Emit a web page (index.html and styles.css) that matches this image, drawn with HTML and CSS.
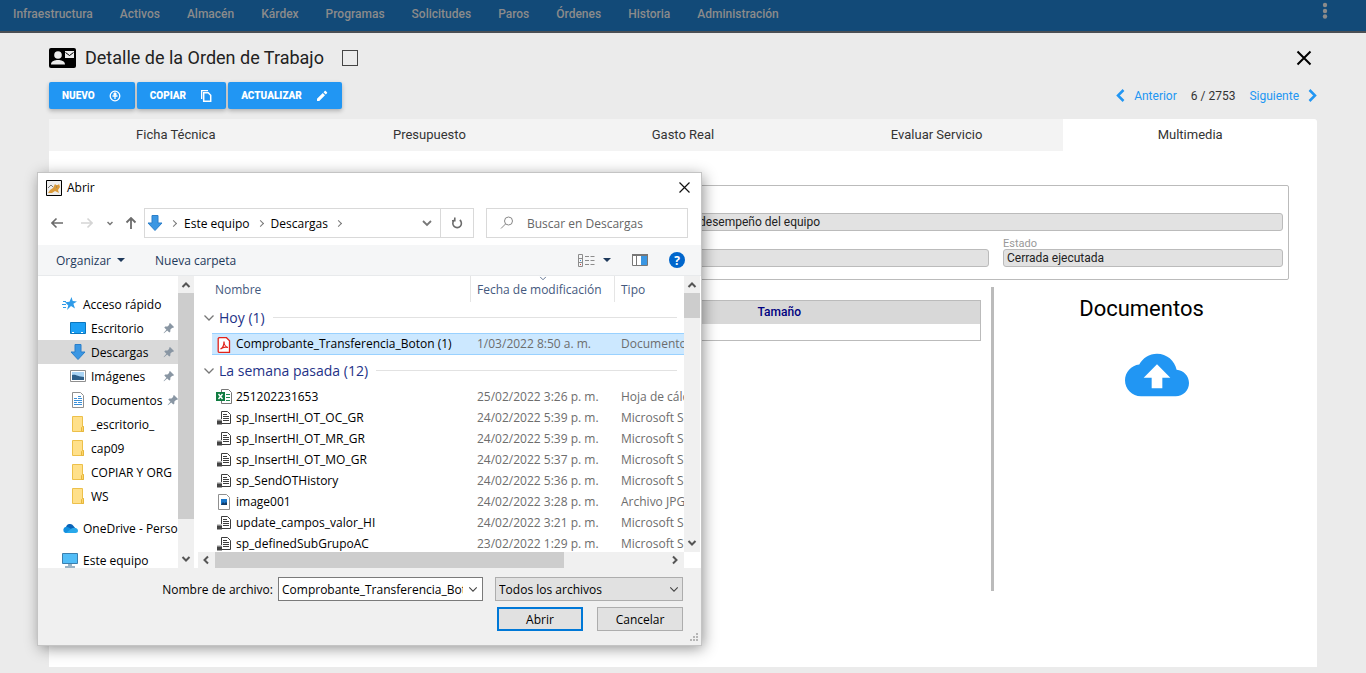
FILE: index.html
```html
<!DOCTYPE html>
<html lang="es">
<head>
  <meta charset="UTF-8">
  <meta name="viewport" content="width=device-width, initial-scale=1.0">
  <title>Detalle de la Orden de Trabajo</title>
  <link rel="stylesheet" href="styles.css">
</head>
<body>
  <svg width="0" height="0" class="sprites" aria-hidden="true">
    <symbol id="i-pin" viewBox="0 0 12 12">
      <path fill="#8996a3" d="M7 1l4 4-1 1-.7-.3L7.400 7.600 7.300 9.800 6.300 10.600 4.200 8.500 1 11.300.6 11 3.400 7.700 1.300 5.600 2.200 4.600 4.500 4.500 6.300 2.700 6 2z"/>
    </symbol>
    <symbol id="i-folder" viewBox="0 0 16 16">
      <path fill="#ffe08a" stroke="#edc04a" d="M2.500.5h10V10l1 1v4.500h-11z"/>
      <path fill="#ffd768" stroke="#e5b63e" d="M11.500 15.500v-4l1-1h1v5z"/>
    </symbol>
    <symbol id="i-down" viewBox="0 0 16 16">
      <path fill="#3b97e3" stroke="#2a7fca" d="M5 .5h6v7.500h4L8 15.500 1 8h4z"/>
    </symbol>
    <symbol id="i-sql" viewBox="0 0 16 16">
      <path fill="#fff" stroke="#3c3c3c" d="M5.500 1.500h6l3 3v9h-9z"/>
      <path stroke="#3c3c3c" d="M7 4.500h4M7 6.500h6M7 8.500h6M7 10.500h6"/>
      <path fill="#444" d="M1 9h5v5.500H1z"/>
      <path fill="#ccc" d="M1 9h5v1.500H1z"/>
    </symbol>
    <symbol id="i-chev" viewBox="0 0 12 8">
      <path fill="none" stroke="currentColor" stroke-width="1.300" d="M1.500 1.500L6 6l4.500-4.500"/>
    </symbol>
    <symbol id="i-arrow" viewBox="0 0 10 8">
      <path fill="none" stroke="currentColor" stroke-width="2" d="M1.500 6L5 2.500 8.500 6"/>
    </symbol>
  </svg>

  <header class="topbar">
    <nav>
      <a href="#">Infraestructura</a>
      <a href="#">Activos</a>
      <a href="#">Almacén</a>
      <a href="#">Kárdex</a>
      <a href="#">Programas</a>
      <a href="#">Solicitudes</a>
      <a href="#">Paros</a>
      <a href="#">Órdenes</a>
      <a href="#">Historia</a>
      <a href="#">Administración</a>
    </nav>
    <button type="button" class="more" aria-label="Más opciones">
      <svg width="6" height="18" viewBox="0 0 6 18" fill="#8b8b8b"><circle cx="3" cy="3" r="2.200"/><circle cx="3" cy="9" r="2.200"/><circle cx="3" cy="14.500" r="2.200"/></svg>
    </button>
  </header>

  <main class="page">
    <div class="title-row">
      <svg width="27" height="20" viewBox="0 0 27 20">
        <rect width="27" height="20" rx="2"/>
        <circle cx="9" cy="7" r="3.800" fill="#ebebeb"/>
        <path fill="#ebebeb" d="M2 16.500c0-3.500 4-4.500 7-4.500s7 1 7 4.500zM16 3h9v7h-9z"/>
        <path fill="none" stroke="#000" d="M16.500 4.500l4 3 4-3"/>
      </svg>
      <h1>Detalle de la Orden de Trabajo</h1>
      <input type="checkbox" class="check" aria-label="Seleccionar orden">
      <button type="button" class="close" aria-label="Cerrar">
        <svg width="16" height="16" viewBox="0 0 16 16" stroke="#000" stroke-width="2"><path d="M1.500 1.500l13 13M14.500 1.500l-13 13"/></svg>
      </button>
    </div>

    <div class="actions">
      <button type="button" class="btn">NUEVO
        <svg width="12" height="12" viewBox="0 0 12 12" fill="none" stroke="#fff" stroke-width="1.300"><circle cx="6" cy="6" r="4.800"/><path d="M6 9V3M3.500 6h5M4.500 4.500L6 3l1.500 1.500"/></svg>
      </button>
      <button type="button" class="btn">COPIAR
        <svg width="12" height="12" viewBox="0 0 12 12"><path fill="#fff" d="M1 0h7v1.300H2.300V9H1z"/><path fill="none" stroke="#fff" stroke-width="1.500" d="M3.700 2.700h4.500l2.500 2.500v6h-7z"/></svg>
      </button>
      <button type="button" class="btn">ACTUALIZAR
        <svg width="12" height="12" viewBox="0 0 24 24" fill="#fff"><path d="M2 17.500V22h4.500L18 10.500 13.500 6zM22 6.500c.6-.6.600-1.500 0-2L19.500 2c-.5-.6-1.400-.6-2 0L15 4.500 19.500 9z"/></svg>
      </button>
      <div class="pager">
        <a href="#"><svg width="9" height="13" viewBox="0 0 9 13" fill="none" stroke="#2196f3" stroke-width="2.500"><path d="M7.500 1L2 6.500 7.500 12"/></svg>Anterior</a>
        <span>6 / 2753</span>
        <a href="#">Siguiente<svg width="9" height="13" viewBox="0 0 9 13" fill="none" stroke="#2196f3" stroke-width="2.500"><path d="M1.500 1L7 6.500 1.500 12"/></svg></a>
      </div>
    </div>

    <div class="tabs" role="tablist">
      <button type="button" role="tab">Ficha Técnica</button>
      <button type="button" role="tab">Presupuesto</button>
      <button type="button" role="tab">Gasto Real</button>
      <button type="button" role="tab">Evaluar Servicio</button>
      <button type="button" role="tab" class="active" aria-selected="true">Multimedia</button>
    </div>

    <section class="panel">
      <div class="order-box">
        <input type="text" class="field wide" aria-label="Descripción" value="desempeño del equipo" readonly>
        <input type="text" class="field mid" aria-label="Tipo" readonly>
        <div class="state">
          <label for="estado">Estado</label>
          <input type="text" id="estado" class="field" value="Cerrada ejecutada" readonly>
        </div>
      </div>
      <div class="media">
        <table class="files">
          <thead><tr><th></th><th>Tamaño</th></tr></thead>
          <tbody><tr><td></td><td></td></tr></tbody>
        </table>
        <div class="docs">
          <h2>Documentos</h2>
          <button type="button" class="upload" aria-label="Subir documento">
            <svg width="64" height="64" viewBox="0 0 24 24" fill="#2196f3"><path d="M19.350 10.040C18.670 6.590 15.640 4 12 4 9.110 4 6.600 5.640 5.350 8.040 2.340 8.360 0 10.910 0 14c0 3.310 2.690 6 6 6h13c2.760 0 5-2.240 5-5 0-2.640-2.050-4.780-4.650-4.960zM14 13v4h-4v-4H7l5-5 5 5h-3z"/></svg>
          </button>
        </div>
      </div>
    </section>
  </main>

  <div class="dialog" role="dialog" aria-label="Abrir">
    <div class="dlg-title">
      <svg width="16" height="16" viewBox="0 0 16 16">
        <path fill="#eee" stroke="#000" d="M.5.5h15v15H.5z"/>
        <path fill="#d99a3b" d="M2 13l2-3 3-2 2-4 1 1h2l1-1 1 3-2 3 1 3-2-1-2-1-3 2z"/>
        <path fill="none" stroke="#777" d="M2 8l3-3 2 2M10 7h1"/>
      </svg>
      <span>Abrir</span>
      <button type="button" aria-label="Cerrar">
        <svg width="11" height="11" viewBox="0 0 11 11" stroke="#111" stroke-width="1.200"><path d="M.5.5l10 10M10.500.5l-10 10"/></svg>
      </button>
    </div>

    <div class="dlg-nav">
      <div class="arrows">
        <button type="button" aria-label="Atrás"><svg width="12" height="12" viewBox="0 0 12 12" fill="none" stroke="#6c6c6c" stroke-width="1.600"><path d="M12 6H1M5.500 1.500L1 6l4.500 4.500"/></svg></button>
        <button type="button" aria-label="Adelante"><svg width="12" height="12" viewBox="0 0 12 12" fill="none" stroke="#d5d5d5" stroke-width="1.600"><path d="M0 6h11M6.500 1.500L11 6l-4.500 4.500"/></svg></button>
        <button type="button" aria-label="Recientes"><svg width="6" height="5" viewBox="0 0 6 5" fill="none" stroke="#777" stroke-width="1.500"><path d="M.5 1L3 3.500 5.500 1"/></svg></button>
        <button type="button" aria-label="Subir"><svg width="12" height="12" viewBox="0 0 12 12" fill="none" stroke="#6c6c6c" stroke-width="1.800"><path d="M6 12V1M1.500 5.500L6 1l4.500 4.500"/></svg></button>
      </div>
      <div class="address">
        <svg width="16" height="16"><use href="#i-down"/></svg>
        <span class="sep"></span>
        <a href="#">Este equipo</a>
        <span class="sep"></span>
        <a href="#">Descargas</a>
        <span class="sep"></span>
        <button type="button" class="drop" aria-label="Ubicaciones"><svg width="10" height="7" viewBox="0 0 10 7" fill="none" stroke="#777" stroke-width="1.800"><path d="M1 1l4 4 4-4"/></svg></button>
        <button type="button" class="refresh" aria-label="Actualizar"><svg width="12" height="12" viewBox="0 0 12 12" fill="none" stroke="#6c6c6c" stroke-width="1.600"><path d="M8.800 3A4.300 4.300 0 1 1 3.200 3.200M3.800.5v3.200H1"/></svg></button>
      </div>
      <div class="search">
        <svg width="14" height="14" viewBox="0 0 14 14" fill="none" stroke="#888"><circle cx="8.500" cy="5" r="4"/><path d="M5.500 8L1 12.500"/></svg>
        <input type="text" placeholder="Buscar en Descargas" aria-label="Buscar en Descargas">
      </div>
    </div>

    <div class="toolbar">
      <button type="button">Organizar <i class="tri"></i></button>
      <button type="button">Nueva carpeta</button>
      <div class="views">
        <button type="button" aria-label="Cambiar vista">
          <svg width="17" height="13" viewBox="0 0 17 13" fill="none"><path stroke="#8c8c8c" d="M.5.5h4v12h-4zM.5 4.500h4M.5 8.500h4M7 2.500h4M7 6.500h4M7 10.500h4M12.500 2.500h4M12.500 6.500h4M12.500 10.500h4"/><path stroke="#3a8fd8" d="M2 6.500h1"/><path stroke="#c44" d="M2 10.500h1"/></svg>
          <i class="tri"></i>
        </button>
        <button type="button" aria-label="Panel de vista previa">
          <svg width="16" height="12" viewBox="0 0 16 12"><path fill="#fff" stroke="#777" d="M.5.5h15v11H.5z"/><path fill="#777" d="M0 0h16v2H0zM4 2h1v9H4z"/><path fill="#3b97e3" d="M9 2h6v9H9z"/></svg>
        </button>
        <button type="button" class="help" aria-label="Ayuda">?</button>
      </div>
    </div>

    <div class="dlg-body">
      <div class="side">
        <ul class="tree">
          <li class="root"><svg width="16" height="16" viewBox="0 0 16 16"><path fill="#2f9be8" d="M9.500 1l1.200 4 4.300.4-3.600 2.400 1.600 4.700-4-2.400L5 14l1.300-4.600L3 6.300l4.500-.6z"/><path stroke="#2f9be8" d="M1 5.500h3M0 8.500h4M1 11.500h3"/></svg>Acceso rápido</li>
          <li><svg width="16" height="16" viewBox="0 0 16 16"><path fill="#1ba0f5" stroke="#0b76bd" d="M.5 2.500h15v11H.5z"/><path stroke="#fff" stroke-dasharray="2 1" d="M2 12.500h2M11 12.500h3"/></svg><span>Escritorio</span><svg class="pin" width="12" height="12"><use href="#i-pin"/></svg></li>
          <li class="current"><svg width="16" height="16"><use href="#i-down"/></svg><span>Descargas</span><svg class="pin" width="12" height="12"><use href="#i-pin"/></svg></li>
          <li><svg width="16" height="16" viewBox="0 0 16 16"><path fill="#fff" stroke="#8f8f8f" d="M.5 2.500h15v11H.5z"/><path fill="#a9d4f5" d="M2 4h12v5H2z"/><path fill="#2d5f8a" d="M2 7c4-1 6 2 12 2v3H2z"/></svg><span>Imágenes</span><svg class="pin" width="12" height="12"><use href="#i-pin"/></svg></li>
          <li><svg width="16" height="16" viewBox="0 0 16 16"><path fill="#fff" stroke="#8f8f8f" d="M2.500.5h8l3 3v12h-11z"/><path stroke="#3a8fd8" d="M4 6.500h3M8 4.500h3M8 6.500h4M4 8.500h8M4 10.500h3M8 10.500h4M4 12.500h8"/></svg><span>Documentos</span><svg class="pin" width="12" height="12"><use href="#i-pin"/></svg></li>
          <li><svg width="16" height="16"><use href="#i-folder"/></svg><span>_escritorio_</span></li>
          <li><svg width="16" height="16"><use href="#i-folder"/></svg><span>cap09</span></li>
          <li><svg width="16" height="16"><use href="#i-folder"/></svg><span>COPIAR Y ORG</span></li>
          <li><svg width="16" height="16"><use href="#i-folder"/></svg><span>WS</span></li>
          <li class="root gap"><svg width="16" height="16" viewBox="0 0 16 16"><path fill="#0a64b8" d="M4 8a4 4 0 0 1 7.500-2L14 9l-9 3z"/><path fill="#1490df" d="M3.500 13A3.200 3.200 0 0 1 4 6.800c2 0 3 1 5 2.200l3 4z"/><path fill="#28a8ea" d="M4 13l5.500-4.500C12 7 16 8 16 10.700 16 12 15 13 13.500 13z"/></svg>OneDrive - Personal</li>
          <li class="root gap"><svg width="16" height="16" viewBox="0 0 16 16"><path fill="#52bdf7" stroke="#3b7fae" d="M.5 1.500h15v10H.5z"/><path stroke="#7a9bb3" stroke-width="1.500" d="M6 13h4M3 15h10"/></svg>Este equipo</li>
        </ul>
        <div class="vbar">
          <svg width="10" height="8"><use href="#i-arrow"/></svg>
          <div class="thumb"></div>
          <svg class="flip" width="10" height="8"><use href="#i-arrow"/></svg>
        </div>
      </div>

      <div class="list">
        <div class="list-view">
          <table>
            <colgroup><col class="c-pad"><col><col class="c-date"><col class="c-type"></colgroup>
            <thead>
              <tr><th></th><th>Nombre</th><th class="line sorted">Fecha de modificación<svg width="8" height="5" viewBox="0 0 12 8"><use href="#i-chev"/></svg></th><th class="line">Tipo</th></tr>
            </thead>
            <tbody>
              <tr class="group"><th colspan="4"><div><svg width="12" height="8"><use href="#i-chev"/></svg>Hoy (1)</div></th></tr>
              <tr class="selected"><td></td><td><svg width="16" height="16" viewBox="0 0 16 16"><path fill="#fff" stroke="#e2231a" stroke-width="1.300" d="M3 .7h7.500l3 3v11.600H3A.8.800 0 0 1 2.200 14.500v-13z"/><path fill="none" stroke="#e2231a" stroke-width="1.200" d="M4.500 12c2-1 3.500-4 3.500-7.500C8 7 9.500 10 12 10.500 9 9.500 7 10 4.500 12z"/></svg>Comprobante_Transferencia_Boton (1)</td><td>1/03/2022 8:50 a. m.</td><td>Documento Adobe</td></tr>
            </tbody>
            <tbody>
              <tr class="group"><th colspan="4"><div><svg width="12" height="8"><use href="#i-chev"/></svg>La semana pasada (12)</div></th></tr>
              <tr><td></td><td><svg width="16" height="16" viewBox="0 0 16 16"><path fill="#fff" stroke="#777" d="M5.500.5h7l3 3v11h-10z"/><path stroke="#1d8a50" d="M10 5.500h4M10 8.500h4M10 11.500h4"/><path fill="#107c41" d="M0 3h9v9H0z"/><path stroke="#fff" stroke-width="1.400" d="M2.500 5l4 5M6.500 5l-4 5"/></svg>251202231653</td><td>25/02/2022 3:26 p. m.</td><td>Hoja de cálculo</td></tr>
              <tr><td></td><td><svg width="16" height="16"><use href="#i-sql"/></svg>sp_InsertHI_OT_OC_GR</td><td>24/02/2022 5:39 p. m.</td><td>Microsoft SQL</td></tr>
              <tr><td></td><td><svg width="16" height="16"><use href="#i-sql"/></svg>sp_InsertHI_OT_MR_GR</td><td>24/02/2022 5:39 p. m.</td><td>Microsoft SQL</td></tr>
              <tr><td></td><td><svg width="16" height="16"><use href="#i-sql"/></svg>sp_InsertHI_OT_MO_GR</td><td>24/02/2022 5:37 p. m.</td><td>Microsoft SQL</td></tr>
              <tr><td></td><td><svg width="16" height="16"><use href="#i-sql"/></svg>sp_SendOTHistory</td><td>24/02/2022 5:36 p. m.</td><td>Microsoft SQL</td></tr>
              <tr><td></td><td><svg width="16" height="16" viewBox="0 0 16 16"><path fill="#fff" stroke="#8f8f8f" d="M2.500.5h8l3 3v12h-11z"/><path fill="#1976c9" d="M5 5h6v6H5z"/><path fill="#123a66" d="M5 11l2-3 1.500 1.500L10 8l1 1v2z"/></svg>image001</td><td>24/02/2022 3:28 p. m.</td><td>Archivo JPG</td></tr>
              <tr><td></td><td><svg width="16" height="16"><use href="#i-sql"/></svg>update_campos_valor_HI</td><td>24/02/2022 3:21 p. m.</td><td>Microsoft SQL</td></tr>
              <tr><td></td><td><svg width="16" height="16"><use href="#i-sql"/></svg>sp_definedSubGrupoAC</td><td>23/02/2022 1:29 p. m.</td><td>Microsoft SQL</td></tr>
            </tbody>
          </table>
        </div>
        <div class="vbar">
          <svg width="10" height="8"><use href="#i-arrow"/></svg>
          <div class="thumb"></div>
          <svg class="flip" width="10" height="8"><use href="#i-arrow"/></svg>
        </div>
        <div class="hbar">
          <svg class="left" width="10" height="8"><use href="#i-arrow"/></svg>
          <div class="thumb"></div>
          <svg class="right" width="10" height="8"><use href="#i-arrow"/></svg>
        </div>
      </div>
    </div>

    <div class="dlg-foot">
      <div class="foot-row">
        <label for="filename">Nombre de archivo:</label>
        <div class="combo">
          <input type="text" id="filename" value="Comprobante_Transferencia_Boton (1)">
          <button type="button" aria-label="Mostrar nombres"><svg width="10" height="7" viewBox="0 0 12 8"><use href="#i-chev"/></svg></button>
        </div>
        <div class="filter">
          <select aria-label="Tipo de archivo"><option>Todos los archivos</option></select>
          <svg width="10" height="7" viewBox="0 0 12 8"><use href="#i-chev"/></svg>
        </div>
      </div>
      <div class="foot-row buttons">
        <button type="button" class="primary">Abrir</button>
        <button type="button">Cancelar</button>
      </div>
      <svg class="grip" width="9" height="9" viewBox="0 0 9 9" fill="#b5b5b5"><path d="M7 0h2v2H7zM7 3h2v2H7zM7 6h2v2H7zM4 3h2v2H4zM4 6h2v2H4zM1 6h2v2H1z"/></svg>
    </div>
  </div>
</body>
</html>
```
FILE: styles.css
```css
* {
  box-sizing: border-box;
}

body {
  margin: 0;
  min-height: 100vh;
  display: flex;
  flex-direction: column;
  background: #ebebeb;
  font-family: Roboto, sans-serif;
  font-size: 12px;
  color: #333;
}

button {
  margin: 0;
  padding: 0;
  border: none;
  background: none;
  font: inherit;
  color: inherit;
  cursor: pointer;
}

a {
  color: inherit;
  text-decoration: none;
}

svg {
  flex: none;
}

.sprites {
  position: absolute;
}

/* top bar */
.topbar {
  display: flex;
  justify-content: space-between;
  align-items: flex-start;
  height: 33px;
  padding: 0 38px 0 13px;
  background: #124a78;
  border-bottom: 2px solid #4a4f54;
  color: #8b8b8b;
}

.topbar nav {
  display: flex;
  gap: 27px;
  line-height: 28px;
  font-weight: 500;
}

.more {
  height: 22px;
  display: flex;
  align-items: center;
}

/* work order */
.page {
  flex: 1;
  display: flex;
  flex-direction: column;
  margin: 0 49px 6px;
}

.title-row {
  display: flex;
  align-items: center;
  height: 49px;
  padding-right: 5px;
}

.title-row h1 {
  margin: 0 18px 0 9px;
  font-size: 18px;
  font-weight: 400;
  color: #222;
}

.check {
  appearance: none;
  width: 16px;
  height: 16px;
  margin: 0;
  border: 1px solid #444;
}

.close {
  margin-left: auto;
  display: flex;
}

.actions {
  display: flex;
  align-items: center;
  gap: 2px;
  margin-bottom: 10px;
}

.btn {
  display: flex;
  align-items: center;
  gap: 14px;
  height: 27px;
  padding: 0 14px 0 13px;
  background: #2196f3;
  border-radius: 2px;
  box-shadow: 0 2px 4px rgba(0, 0, 0, 0.25);
  color: #fff;
  font-size: 10px;
  font-weight: 900;
}

.pager {
  display: flex;
  align-items: center;
  gap: 14px;
  margin-left: auto;
}

.pager a {
  display: flex;
  align-items: center;
  gap: 9px;
  color: #2196f3;
}

.tabs {
  display: flex;
}

.tabs button {
  flex: 1;
  height: 32px;
  padding-bottom: 2px;
  background: #f3f3f3;
  font-size: 13px;
}

.tabs .active {
  background: #fff;
  border-top-right-radius: 3px;
}

.panel {
  flex: 1;
  padding: 34px 28px;
  background: #fff;
}

.order-box {
  display: grid;
  grid-template-columns: 1fr 294px 280px;
  gap: 8px 14px;
  padding: 27px 5px 12px;
  border: 1px solid #bbb;
  border-radius: 2px;
}

.field {
  width: 100%;
  height: 18px;
  padding: 0 3px;
  background: #e2e2e2;
  border: 1px solid #bbb;
  border-radius: 3px;
  font: 12px Roboto, sans-serif;
  color: #222;
}

.wide {
  grid-column: 2 / 4;
}

.mid {
  grid-column: 2;
  align-self: end;
}

.state {
  display: flex;
  flex-direction: column;
}

.state label {
  font-size: 11px;
  line-height: 10px;
  color: #999;
}

.media {
  display: flex;
  margin-top: 7px;
}

.files {
  flex: 1;
  align-self: flex-start;
  margin: 13px 10px 0 0;
  border-collapse: collapse;
  border: 1px solid #bbb;
  table-layout: fixed;
}

.files th {
  height: 23px;
  padding: 0;
  background: #d8d8d8;
  color: #000080;
  font-weight: 500;
}

.files th:last-child {
  width: 402px;
}

.files td {
  height: 17px;
  padding: 0;
}

.docs {
  width: 298px;
  min-height: 304px;
  padding-top: 8px;
  border-left: 3px solid #bbb;
  text-align: center;
}

.docs h2 {
  margin: 0 0 20px;
  font-size: 22px;
  font-weight: 400;
  line-height: 28px;
  color: #000;
}

.upload {
  margin-left: 30px;
}

/* open file dialog */
.dialog {
  position: absolute;
  left: 38px;
  top: 173px;
  width: 663px;
  background: #fff;
  box-shadow: 0 0 0 1px #c4c4c4, 2px 3px 14px rgba(0, 0, 0, 0.45);
  font-family: "Open Sans", sans-serif;
  font-size: 12px;
  color: #000;
}

.dialog button {
  display: flex;
  align-items: center;
  justify-content: center;
}

.dlg-title {
  display: flex;
  align-items: center;
  gap: 5px;
  height: 29px;
  padding: 0 11px 0 8px;
}

.dlg-title button {
  margin-left: auto;
}

.dlg-nav {
  display: flex;
  height: 43px;
  padding: 6px 13px 7px;
}

.arrows {
  display: flex;
  align-items: center;
  width: 93px;
  gap: 18px;
}

.arrows button:nth-child(3) {
  margin: 0 -6px 0 -4px;
}

.address {
  flex: 1;
  display: flex;
  align-items: center;
  gap: 8px;
  padding-left: 2px;
  border: 1px solid #d9d9d9;
}

.sep {
  width: 5px;
  height: 5px;
  border: solid #777;
  border-width: 1px 1px 0 0;
  transform: rotate(45deg);
}

.drop {
  margin-left: auto;
}

.refresh {
  align-self: stretch;
  width: 33px;
  border-left: 1px solid #d9d9d9 !important;
}

.search {
  display: flex;
  align-items: center;
  gap: 13px;
  width: 202px;
  margin-left: 12px;
  padding-left: 13px;
  border: 1px solid #d9d9d9;
}

.search input {
  flex: 1;
  min-width: 0;
  padding: 0;
  border: none;
  font: inherit;
}

.search input::placeholder {
  color: #666;
}

.toolbar {
  display: flex;
  align-items: center;
  gap: 30px;
  height: 31px;
  padding: 0 16px 0 18px;
  background: #f5f6f7;
  border-bottom: 1px solid #e8eaec;
  color: #1e395b;
}

.toolbar button {
  gap: 6px;
}

.tri {
  border: 4px solid transparent;
  border-top-color: #1e395b;
  border-bottom: none;
}

.views {
  display: flex;
  align-items: center;
  gap: 21px;
  margin-left: auto;
}

.views button:first-child {
  gap: 8px;
}

.toolbar .help {
  width: 16px;
  height: 16px;
  background: #0066cc;
  border-radius: 50%;
  color: #fff;
  font-weight: 700;
}

.dlg-body {
  display: flex;
  height: 292px;
}

.side {
  display: flex;
  width: 156px;
}

.tree {
  flex: 1;
  min-width: 0;
  margin: 0;
  padding: 16px 0 0;
  list-style: none;
  overflow: hidden;
}

.tree li {
  display: flex;
  align-items: center;
  gap: 5px;
  height: 24px;
  padding: 0 3px 0 32px;
  white-space: nowrap;
}

.tree .root {
  padding-left: 24px;
}

.tree .gap {
  margin-top: 8px;
}

.tree .current {
  background: #d9d9d9;
}

.tree .pin {
  margin-left: auto;
}

.vbar {
  display: flex;
  flex-direction: column;
  align-items: center;
  width: 16px;
  padding: 5px 0;
  background: #f0f0f0;
  color: #555;
}

.thumb {
  background: #cdcdcd;
}

.vbar .thumb {
  width: 16px;
  height: 226px;
  margin: 4px 0 auto;
}

.list .vbar .thumb {
  height: 25px;
}

.flip {
  transform: rotate(180deg);
}

.list {
  flex: 1;
  min-width: 0;
  display: grid;
  grid-template-columns: 1fr 16px;
  grid-template-rows: 276px 16px;
  padding: 0 1px 0 4px;
}

.list-view {
  overflow: hidden;
}

.list table {
  width: 100%;
  table-layout: fixed;
  border-spacing: 0;
}

.list th,
.list td {
  padding: 0 0 0 6px;
  font-weight: 400;
  text-align: left;
  white-space: nowrap;
  overflow: hidden;
}

.list thead th {
  position: relative;
  height: 26px;
  color: #44597e;
}

.list thead th:nth-child(2) {
  padding-left: 3px;
}

.list .line {
  border-left: 1px solid #e5e5e5;
}

.sorted svg {
  position: absolute;
  top: 0;
  left: 68px;
}

.c-pad {
  width: 14px;
}

.c-date {
  width: 144px;
}

.c-type {
  width: 70px;
}

.list td {
  height: 21px;
  padding-left: 7px;
  line-height: 20px;
  color: #6d6d6d;
}

.list td:nth-child(2) {
  padding-left: 4px;
  color: #000;
}

.list td svg {
  margin-right: 4px;
  vertical-align: middle;
}

.group div {
  display: flex;
  align-items: center;
  gap: 4px;
  height: 31px;
  padding-right: 7px;
  font-size: 14px;
  color: #1e3287;
}

.group div svg {
  color: #777;
}

.group div::after {
  content: "";
  flex: 1;
  height: 1px;
  margin-left: 4px;
  background: #e2e2e2;
}

.group th {
  padding-left: 5px !important;
}

.selected td {
  height: 22px;
}

.selected td:not(:first-child) {
  background: #cce8ff;
  border: solid #99d1ff;
  border-width: 1px 0;
}

.hbar {
  display: flex;
  align-items: center;
  padding: 0 4px 0 3px;
  background: #f0f0f0;
  color: #555;
}

.hbar .thumb {
  width: 349px;
  height: 16px;
  margin: 0 auto 0 4px;
}

.left {
  transform: rotate(-90deg);
}

.right {
  transform: rotate(90deg);
}

.dlg-foot {
  position: relative;
  padding: 9px 18px 14px;
  background: #f0f0f0;
}

.foot-row {
  display: flex;
  align-items: center;
  justify-content: flex-end;
}

.combo {
  display: flex;
  width: 205px;
  height: 24px;
  margin: 0 12px 0 5px;
  background: #fff;
  border: 1px solid #7a7a7a;
}

.combo input {
  flex: 1;
  min-width: 0;
  padding: 0 0 0 3px;
  border: none;
  font: inherit;
}

.combo button {
  width: 19px;
  color: #444;
}

.filter {
  display: grid;
  align-items: center;
  width: 188px;
  height: 24px;
}

.filter select,
.filter svg {
  grid-area: 1 / 1;
}

.filter select {
  appearance: none;
  height: 24px;
  padding: 0 3px;
  background: #e1e1e1;
  border: 1px solid #adadad;
  border-radius: 0;
  font: inherit;
  color: #000;
}

.filter svg {
  justify-self: end;
  margin-right: 4px;
  color: #444;
  pointer-events: none;
}

.buttons {
  gap: 14px;
  margin-top: 6px;
}

.buttons button {
  width: 86px;
  height: 24px;
  background: #e1e1e1;
  border: 1px solid #adadad;
}

.buttons .primary {
  border: 2px solid #0078d7;
}

.grip {
  position: absolute;
  right: 3px;
  bottom: 3px;
}
```
